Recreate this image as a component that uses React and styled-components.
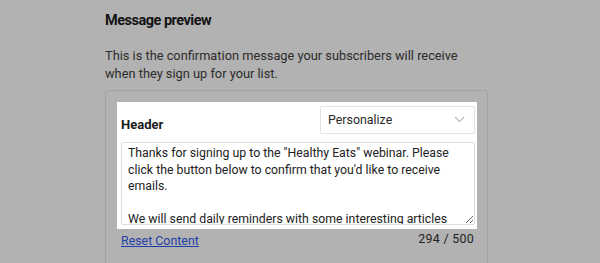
import React from 'react';
import styled, { createGlobalStyle } from 'styled-components';

const Global = createGlobalStyle`
  html, body {
    margin: 0;
    background: #b2b2b2;
    font-family: Roboto, "Noto Sans", Arial, sans-serif;
    -webkit-font-smoothing: antialiased;
  }
`;

const Page = styled.div`
  padding: 11px 0 0 105px;
  width: 383px;
  height: 252px;
  overflow: hidden;
`;

const Title = styled.h2`
  margin: 0;
  font-size: 14.5px;
  line-height: 20px;
  font-weight: 700;
  letter-spacing: -0.5px;
  color: #141414;
`;

const Description = styled.p`
  margin: 16px 0 0;
  font-size: 12.8px;
  line-height: 18px;
  color: #2c2c2c;
  width: 380px;
`;

const Card = styled.div`
  margin-top: 7px;
  border: 1px solid #a2a2a2;
  border-radius: 3px;
  padding: 11px 11px 20px;
  height: 200px;
`;

const Highlight = styled.div`
  background: #fff;
  margin-right: -1px;
  padding: 4px 2px 4px 4px;
`;

const HeaderRow = styled.div`
  display: flex;
  align-items: flex-end;
  justify-content: space-between;
`;

const Label = styled.label`
  font-size: 13px;
  font-weight: 700;
  color: #1a1a1a;
  line-height: 16px;
  margin-bottom: 1px;
`;

const Select = styled.div`
  box-sizing: border-box;
  width: 155px;
  height: 28px;
  border: 1px solid #e2e2ea;
  border-radius: 2px;
  display: flex;
  align-items: center;
  justify-content: space-between;
  padding: 0 9px 2px 7px;
  font-size: 12.4px;
  color: #2a2a2a;
`;

const Chevron = () => (
  <svg width="11" height="7" viewBox="0 0 11 7" fill="none">
    <path d="M1 1l4.5 4.5L10 1" stroke="#b8b8c4" strokeWidth="1.2" />
  </svg>
);

const TextArea = styled.textarea`
  display: block;
  box-sizing: border-box;
  width: 100%;
  height: 83px;
  margin-top: 8px;
  border: 1px solid #dcdce6;
  border-radius: 2px;
  padding: 2px 6px;
  font-family: Roboto, "Noto Sans", Arial, sans-serif;
  font-size: 12.3px;
  line-height: 16.5px;
  color: #222;
  overflow: hidden;
  resize: vertical;
  outline: none;
`;

const Footer = styled.div`
  display: flex;
  justify-content: space-between;
  align-items: flex-start;
  padding: 2px 2px 0 4px;
  font-size: 12.4px;
  line-height: 16px;
`;

const ResetLink = styled.a`
  color: #1f3fa8;
  text-decoration: underline;
  margin-top: 2px;
  cursor: pointer;
`;

const Counter = styled.span`
  color: #222;
  letter-spacing: 0.3px;
`;

const message =
  'Thanks for signing up to the "Healthy Eats" webinar. Please click the button below to confirm that you\'d like to receive emails.\n\nWe will send daily reminders with some interesting articles and recipes leading up to the event, so keep an eye on your inbox. See you there!';

export default function App() {
  return (
    <>
      <Global />
      <Page>
        <Title>Message preview</Title>
        <Description>
          This is the confirmation message your subscribers will receive when they sign up for your list.
        </Description>
        <Card>
          <Highlight>
            <HeaderRow>
              <Label>Header</Label>
              <Select>
                <span>Personalize</span>
                <Chevron />
              </Select>
            </HeaderRow>
            <TextArea defaultValue={message} spellCheck={false} />
          </Highlight>
          <Footer>
            <ResetLink>Reset Content</ResetLink>
            <Counter>294 / 500</Counter>
          </Footer>
        </Card>
      </Page>
    </>
  );
}
